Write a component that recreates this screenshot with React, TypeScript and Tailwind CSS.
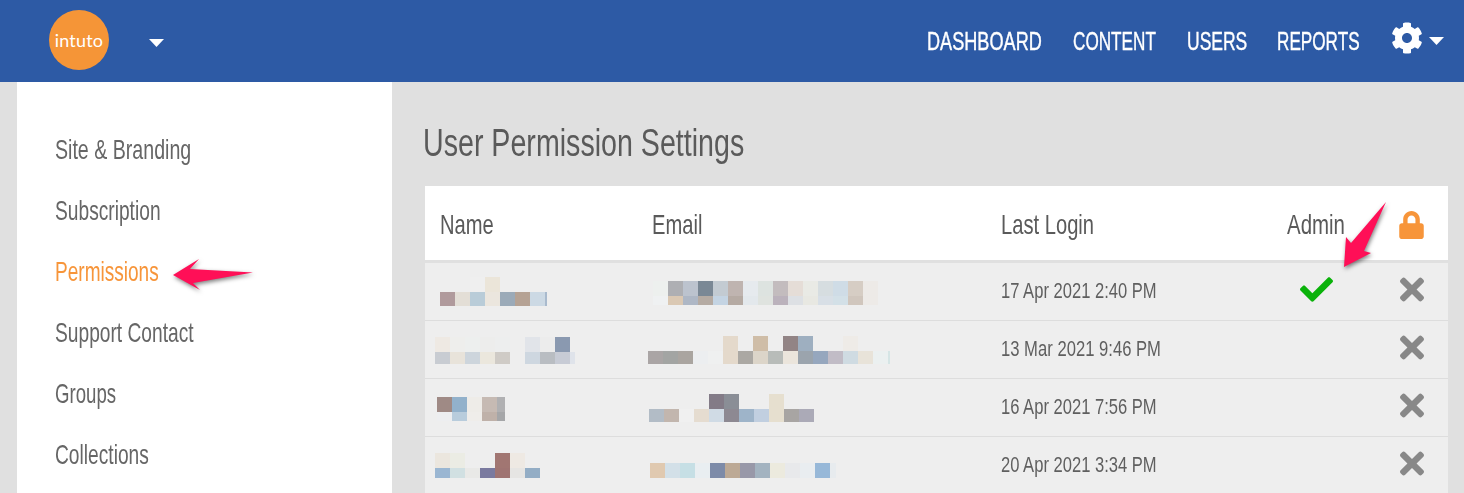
import { FaCog, FaLock, FaCheck, FaTimes } from "react-icons/fa";

const N = "";
type Blob = { x: number; y: number; w: number; h1: number; h2: number; top: string[]; bot: string[]; lastW?: number };

function Pixels({ b }: { b: Blob }) {
  const row = (cols: string[], h: number) => (
    <div className="flex" style={{ height: h }}>
      {cols.map((c, i) => (
        <div key={i} className="shrink-0" style={{ width: i === b.bot.length - 1 && b.lastW ? b.lastW : b.w, background: c || "transparent" }} />
      ))}
    </div>
  );
  return (
    <div className="absolute" style={{ left: b.x, top: b.y }}>
      {row(b.top, b.h1)}
      {row(b.bot, b.h2)}
    </div>
  );
}

const rows = [
  {
    date: "17 Apr 2021 2:40 PM",
    dc: "scale-x-[0.753]",
    check: true,
    name: { x: 15, y: 14, w: 15, h1: 15, h2: 14, lastW: 2, top: [N, N, "#efefef", "#ebe5d9"], bot: ["#b09a9c", "#e3ded6", "#b9ccd8", "#ebe6de", "#9baab8", "#b5a294", "#ccd9e4", "#a9bacd"] },
    email: { x: 16, y: 18, w: 15, h1: 15, h2: 9, top: ["#edf0ee", "#aeafb3", "#bcc3ce", "#7a8895", "#c3cbd2", "#bfb4b0", "#e6eaee", "#dde3e0", "#c3bcbe", "#e5ddd7", "#e9eae5", "#d6dde0", "#cfdce6", "#d6cdc4", "#edeae7"], bot: ["#eff1f2", "#dac8b3", "#aeb7c5", "#b5aba3", "#c4d4e3", "#b5aaa3", "#e3e8ec", "#dfe3df", "#bbb2bc", "#dde0e4", "#e8e8e2", "#d8dfe6", "#d3e0e7", "#d0c6bd", "#edeae7"] },
  },
  {
    date: "13 Mar 2021 9:46 PM",
    dc: "scale-x-[0.756]",
    check: false,
    name: { x: 10, y: 16, w: 15, h1: 15, h2: 12, lastW: 5, top: ["#eee9e3", "#eeeeec", "#edefee", "#ededec", "#edeeee", N, "#e1e4e9", "#ececec", "#8a99b0"], bot: ["#c8ccd2", "#e8e3da", "#cdd5dc", "#ebe7dd", "#cfcbc6", N, "#ced7e0", "#b9bdc2", "#c7cbd5", "#dfe3ea"] },
    email: { x: 11, y: 15, w: 15, h1: 15, h2: 13, lastW: 2, top: [N, N, N, N, N, "#e4d9cb", N, "#cfbda7", N, "#928485", "#9eafc0", N, N, "#eeebe7"], bot: ["#aaa5a5", "#a3a5a3", "#aaa5a0", "#eceef0", "#eff0f0", "#e4d9cb", "#aba8a3", "#dcd5c9", "#b8bcb9", "#ebe5dc", "#9ba4ad", "#96a7be", "#c1bcc6", "#cfdbe2", "#e8e3d9", "#ebf0f0", "#d5e5e5"] },
  },
  {
    date: "16 Apr 2021 7:56 PM",
    dc: "scale-x-[0.753]",
    check: false,
    name: { x: 12, y: 18, w: 15, h1: 15, h2: 9, lastW: 8, top: ["#9f8a85", "#92b1cb", "#eeece8", "#c6bab3", "#b0b0b2"], bot: ["#edeef0", "#b8ccdc", "#efedea", "#bfb1a9", "#a5a6a8"] },
    email: { x: 12, y: 15, w: 15, h1: 15, h2: 13, top: [N, N, N, N, "#837b87", "#8a8e96", N, N, "#e6dfcf"], bot: ["#b2bcc6", "#c2b6ae", "#f0f0f0", "#e5dcd0", "#d0dbe5", "#8d8992", "#9eb4c9", "#c1cfe0", "#e6dfcf", "#a8a5a3", "#abaab7"] },
  },
  {
    date: "20 Apr 2021 3:34 PM",
    dc: "scale-x-[0.753]",
    check: false,
    name: { x: 10, y: 16, w: 15, h1: 15, h2: 10, top: ["#ebe6de", "#ebece4", N, N, "#a17672", "#eee9e3"], bot: ["#9ab6d2", "#d1e0e2", "#e9e9e7", "#7a7a9f", "#9f7472", "#e6e5e3", "#93adc5"] },
    email: { x: 13, y: 26, w: 15, h1: 0, h2: 15, lastW: 6, top: [], bot: ["#e0c9b0", "#d3e0e8", "#c6dfe5", "#e9eef1", "#7d8ba8", "#bca995", "#9898a8", "#a3b3c0", "#eceade", "#e8e9eb", "#e9edf0", "#97b8d8", "#e7ebee"] },
  },
];

const side = [
  { t: "Site & Branding", c: "scale-x-[0.70] text-[#666666]" },
  { t: "Subscription", c: "scale-x-[0.685] text-[#666666]" },
  { t: "Permissions", c: "scale-x-[0.68] text-[#f7953a]" },
  { t: "Support Contact", c: "scale-x-[0.685] text-[#666666]" },
  { t: "Groups", c: "scale-x-[0.665] text-[#666666]" },
  { t: "Collections", c: "scale-x-[0.685] text-[#666666]" },
];
const nav = [
  { t: "DASHBOARD", c: "w-[115px]", s: "scale-x-[0.725]" },
  { t: "CONTENT", c: "w-[83px]", s: "scale-x-[0.686]" },
  { t: "USERS", c: "w-[59px]", s: "scale-x-[0.70]" },
  { t: "REPORTS", c: "w-[83px]", s: "scale-x-[0.686]" },
];
const cols = "grid grid-cols-[212px_349px_286px_112px_64px]";
const squeeze = "inline-block origin-left whitespace-nowrap";

function Caret() {
  return (
    <svg width="15" height="8" viewBox="0 0 15 8" className="block">
      <path d="M0 0H15L7.5 8Z" fill="#fff" />
    </svg>
  );
}

export default function App() {
  return (
    <div className="relative h-[493px] w-[1464px] overflow-hidden bg-[#e0e0e0] font-['Liberation_Sans',sans-serif]">
      <header className="flex h-[82px] items-center bg-[#2d5aa5] pl-[49px] pr-[20px] text-white">
        <div className="mb-[2px] flex h-[60px] w-[60px] items-center justify-center rounded-full bg-[#f59537] pt-[1px] font-['Lato',sans-serif] text-[18px] font-normal tracking-[0.2px]">
          intuto
        </div>
        <div className="ml-[40px] mt-[3px]"><Caret /></div>
        <nav className="ml-auto flex items-center gap-[31px] text-[25px] [-webkit-text-stroke:0.4px_white]">
          {nav.map((n) => (
            <span key={n.t} className={`${n.c} pt-[1px]`}>
              <span className={`${squeeze} ${n.s}`}>{n.t}</span>
            </span>
          ))}
          <span className="flex items-center gap-[6px]">
            <FaCog className="mb-[6px] h-[32px] w-[32px]" />
            <Caret />
          </span>
        </nav>
      </header>
      <div className="flex">
        <aside className="ml-[17px] h-[411px] w-[375px] bg-white pl-[38px] pt-[37px]">
          {side.map((s) => (
            <div key={s.t} className="h-[61px] text-[28px] leading-[61px]">
              <span className={`${squeeze} ${s.c}`}>{s.t}</span>
            </div>
          ))}
        </aside>
        <main className="flex-1 pl-[31px] pr-[16px]">
          <h1 className="pt-[38px] text-[38px] leading-[46px] text-[#5a5a5a]">
            <span className={`${squeeze} scale-x-[0.753]`}>User Permission Settings</span>
          </h1>
          <div className="ml-[2px] mt-[20px]">
            <div className={`${cols} h-[74px] items-center bg-white pt-[4px] text-[28px] text-[#5a5a5a]`}>
              <span className="pl-[15px]"><span className={`${squeeze} scale-x-[0.72]`}>Name</span></span>
              <span className="pl-[15px]"><span className={`${squeeze} scale-x-[0.72]`}>Email</span></span>
              <span className="pl-[15px]"><span className={`${squeeze} scale-x-[0.72]`}>Last Login</span></span>
              <span className="pl-[15px]"><span className={`${squeeze} scale-x-[0.73]`}>Admin</span></span>
              <span className="flex justify-center pr-[9px]"><FaLock className="h-[28px] w-[25px] text-[#f7953a]" /></span>
            </div>
            <div className="h-[3px] bg-[#e0e0e0]" />
            {rows.map((r) => (
              <div key={r.date} className={`${cols} h-[58px] items-center border-b border-[#dddddd] bg-[#eeeeee] text-[22px] text-[#5f5f5f]`}>
                <div className="relative h-full"><Pixels b={r.name} /></div>
                <div className="relative h-full"><Pixels b={r.email} /></div>
                <span className="pb-[2px] pl-[15px]"><span className={`${squeeze} ${r.dc}`}>{r.date}</span></span>
                <span className="flex pb-[5px] pl-[28px]">
                  {r.check && <FaCheck className="h-[33px] w-[33px] text-[#0ab20a]" />}
                </span>
                <span className="flex justify-center pb-[5px] pr-[8px]"><FaTimes className="h-[35px] w-[24px] text-[#888888]" /></span>
              </div>
            ))}
          </div>
        </main>
      </div>

      <svg className="absolute left-[170px] top-[255px] drop-shadow-[1px_2px_2px_rgba(0,0,0,0.5)]" width="88" height="38" viewBox="170 255 88 38">
        <path d="M173 275L199 259L190 269L253 272.5L193 283L200 290Z" fill="#ff0f57" />
      </svg>
      <svg className="absolute left-[1340px] top-[198px] drop-shadow-[1px_2px_2px_rgba(0,0,0,0.5)]" width="50" height="72" viewBox="1340 198 50 72">
        <path d="M1386 202L1351 243L1346 237L1344 267L1371 253L1364 251Z" fill="#ff0f57" />
      </svg>
    </div>
  );
}
